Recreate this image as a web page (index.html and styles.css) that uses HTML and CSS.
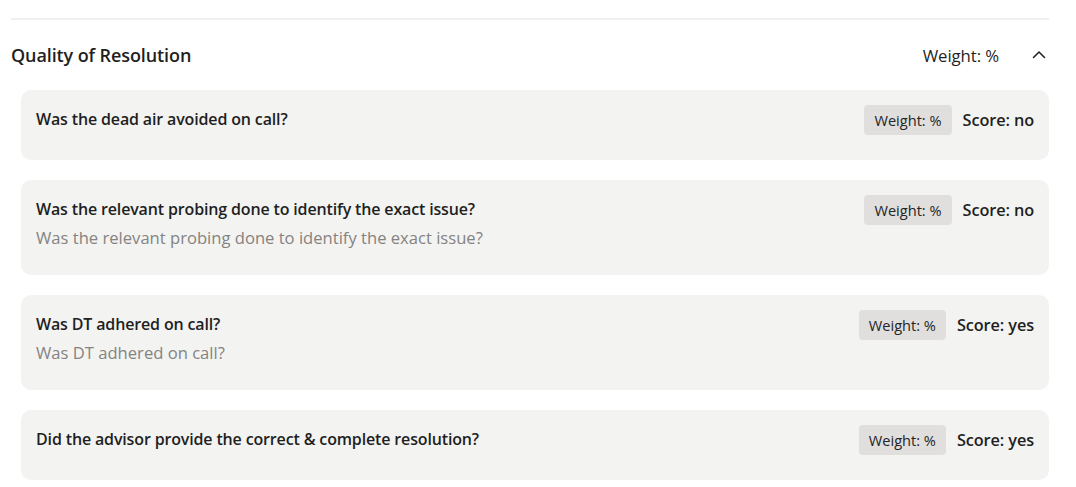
FILE: index.html
```html
<!DOCTYPE html>
<html lang="en">
<head>
<meta charset="utf-8">
<title>Quality of Resolution</title>
<link rel="stylesheet" href="styles.css">
</head>
<body>
<section class="section">
  <div class="divider"></div>
  <div class="section-header">
    <h2 class="section-title">Quality of Resolution</h2>
    <div class="section-meta">
      <span class="section-weight">Weight: %</span>
      <button class="collapse-btn" aria-label="Collapse">
        <svg width="14" height="10" viewBox="0 0 14 10"><path d="M1.5 7.5 L7 2 L12.5 7.5" fill="none" stroke="#242424" stroke-width="1.6" stroke-linecap="round" stroke-linejoin="round"/></svg>
      </button>
    </div>
  </div>
  <div class="questions">
    <div class="card">
      <div class="card-row">
        <div class="q-title">Was the dead air avoided on call?</div>
        <div class="q-meta"><span class="badge">Weight: %</span><span class="score">Score: no</span></div>
      </div>
    </div>
    <div class="card">
      <div class="card-row">
        <div class="q-title">Was the relevant probing done to identify the exact issue?</div>
        <div class="q-meta"><span class="badge">Weight: %</span><span class="score">Score: no</span></div>
      </div>
      <div class="q-desc">Was the relevant probing done to identify the exact issue?</div>
    </div>
    <div class="card">
      <div class="card-row">
        <div class="q-title">Was DT adhered on call?</div>
        <div class="q-meta"><span class="badge">Weight: %</span><span class="score">Score: yes</span></div>
      </div>
      <div class="q-desc">Was DT adhered on call?</div>
    </div>
    <div class="card">
      <div class="card-row">
        <div class="q-title">Did the advisor provide the correct &amp; complete resolution?</div>
        <div class="q-meta"><span class="badge">Weight: %</span><span class="score">Score: yes</span></div>
      </div>
    </div>
  </div>
</section>
</body>
</html>
```
FILE: styles.css
```css
* { box-sizing: border-box; }
html, body { margin: 0; padding: 0; background: #ffffff; }
body {
  font-family: "Open Sans", "Noto Sans", sans-serif;
  color: #1f1f1f;
  padding: 18px 27px 0 11px;
}
.divider {
  height: 2px;
  background: #f0f0f0;
}
.section-header {
  display: flex;
  align-items: center;
  justify-content: space-between;
  height: 70px;
}
.section-title {
  margin: 0;
  font-size: 18px;
  font-weight: 600;
  letter-spacing: -0.1px;
}
.section-meta {
  display: flex;
  align-items: center;
  gap: 33px;
}
.section-weight {
  font-size: 16.8px;
  letter-spacing: -0.1px;
  font-weight: 400;
}
.collapse-btn {
  border: 0;
  background: transparent;
  padding: 0;
  width: 14px;
  height: 20px;
  display: flex;
  align-items: center;
  justify-content: center;
  margin-right: 3px;
}
.questions {
  display: flex;
  flex-direction: column;
  gap: 20px;
  padding-left: 10px;
}
.card {
  background: #f3f3f2;
  border-radius: 10px;
  padding: 15px 15px 25px 15px;
}
.card-row {
  display: flex;
  align-items: center;
  justify-content: space-between;
  height: 30px;
}
.q-title {
  font-size: 16px;
  font-weight: 600;
  letter-spacing: -0.15px;
  margin-top: -3px;
}
.q-meta {
  display: flex;
  align-items: center;
  gap: 11px;
}
.badge {
  background: #e0dfde;
  border-radius: 4px;
  height: 30px;
  padding: 0 10px;
  display: flex;
  align-items: center;
  font-size: 14.6px;
  color: #252525;
}
.score {
  font-size: 16.3px;
  font-weight: 600;
  letter-spacing: -0.1px;
}
.q-desc {
  font-size: 16.6px;
  line-height: 25px;
  color: #858381;
}
```
